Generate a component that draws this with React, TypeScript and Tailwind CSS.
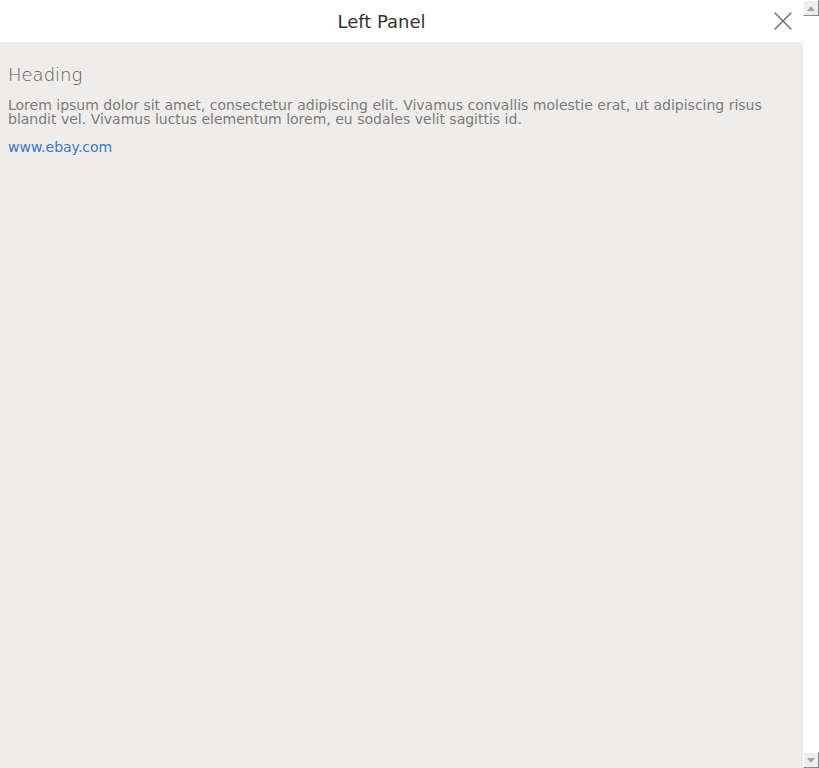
import { X } from 'lucide-react';

function ScrollButton({ up }: { up: boolean }) {
  return (
    <div className="w-4 h-4 bg-[#eeeeee] border border-t-white border-l-white border-r-[#888] border-b-[#888] flex items-center justify-center">
      <svg width="8" height="5" viewBox="0 0 8 5">
        <path d={up ? 'M4 0 L8 5 L0 5 Z' : 'M0 0 L8 0 L4 5 Z'} fill="#a3a3a3" />
      </svg>
    </div>
  );
}

export default function App() {
  return (
    <div className="h-screen flex bg-white" style={{ fontFamily: '"DejaVu Sans", sans-serif' }}>
      <div className="flex-1 flex flex-col">
        {/* Header */}
        <header className="flex items-center h-[42px] bg-white shrink-0">
          <h1 className="flex-1 text-center text-[18px] text-[#333]">Left Panel</h1>
          <button className="w-10 h-[42px] flex items-center justify-center text-[#707070]">
            <X size={32} strokeWidth={1.1} />
          </button>
        </header>

        {/* Body */}
        <div className="flex-1 bg-[#eeedeb] px-2 pt-[21px]">
          <h2 className="text-[18px] font-light text-[#5a5a5a] leading-6">Heading</h2>
          <p className="mt-[11px] text-[14px] leading-[14px] text-[#7a7a7a]">
            Lorem ipsum dolor sit amet, consectetur adipiscing elit. Vivamus convallis molestie erat, ut adipiscing risus
            blandit vel. Vivamus luctus elementum lorem, eu sodales velit sagittis id.
          </p>
          <a href="#" className="block mt-[11px] text-[14px] text-[#3a76cf]">
            www.ebay.com
          </a>
        </div>
      </div>

      {/* Scrollbar */}
      <div className="w-4 flex flex-col justify-between bg-white">
        <ScrollButton up />
        <ScrollButton up={false} />
      </div>
    </div>
  );
}
